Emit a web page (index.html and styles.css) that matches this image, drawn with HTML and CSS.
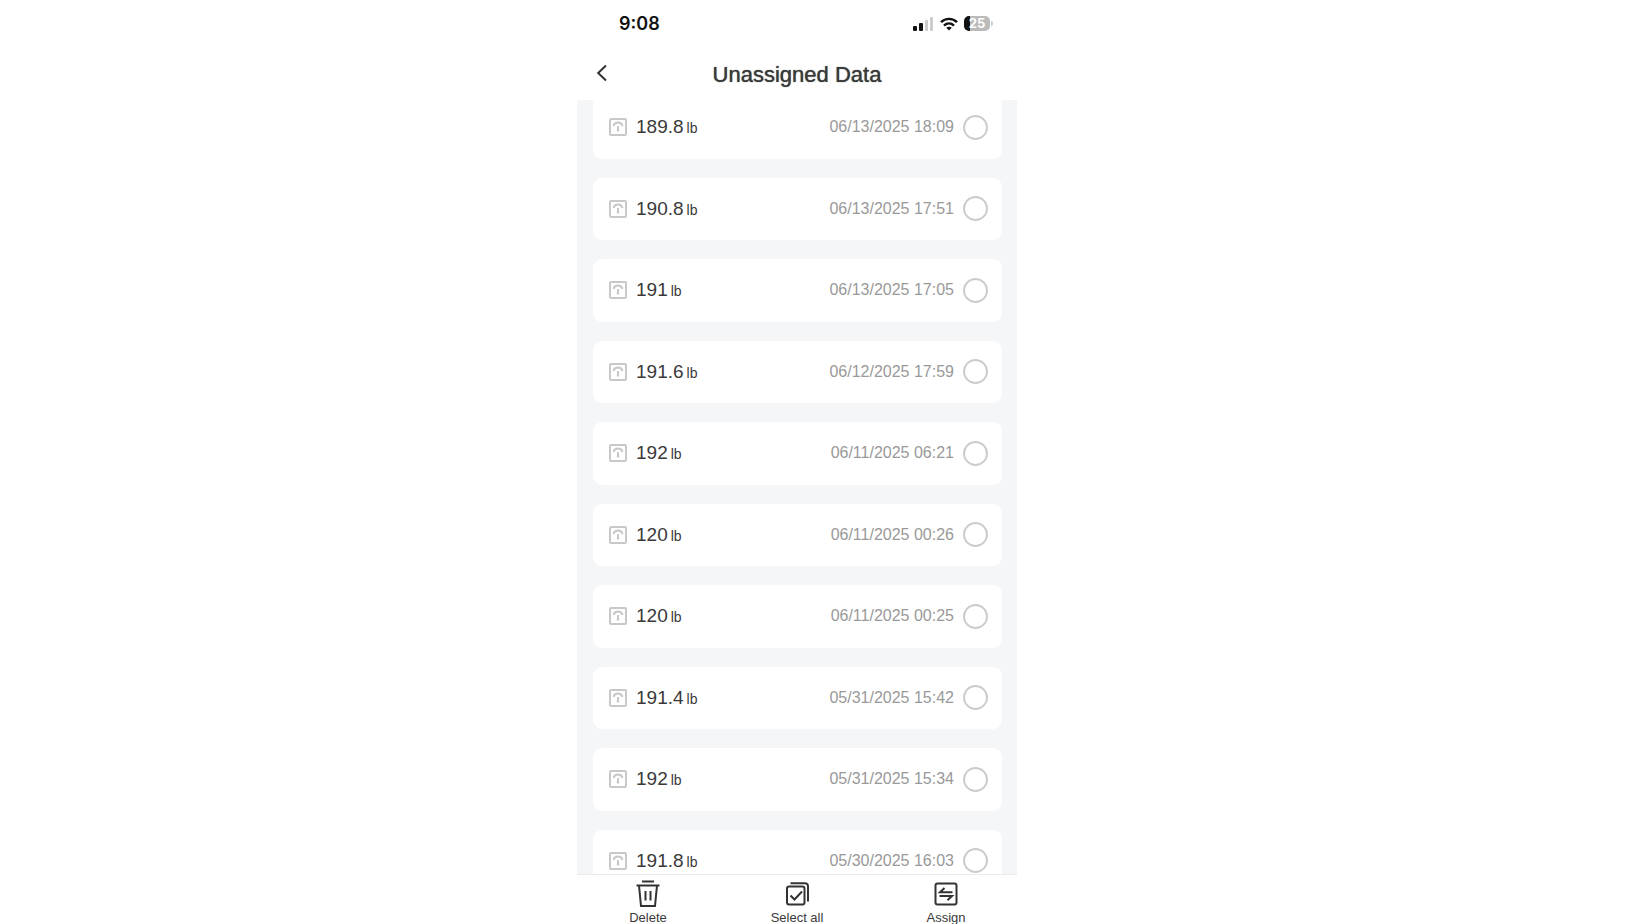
FILE: index.html
```
<!DOCTYPE html>
<html lang="en">
<head>
    <meta charset="UTF-8">
    <meta name="viewport" content="width=device-width, initial-scale=1.0">
    <title>Unassigned Data</title>
    <link rel="stylesheet" href="styles.css">
</head>
<body>
    <!-- Shared scale icon -->
    <svg class="sprite" width="0" height="0" aria-hidden="true">
        <symbol id="scale" viewBox="0 0 18 18">
            <rect x="1" y="1" width="16" height="16" rx="1" />
            <path d="M4.500 8C5.200 5.500 7 4.600 9 4.600s3.800.9 4.500 3.400" />
            <path d="M9 8v5.500M7.800 12.300h2.400" />
        </symbol>
    </svg>

    <div class="phone">
        <div class="status-bar">
            <span class="clock">9:08</span>
            <div class="status-icons">
                <svg width="21" height="14" viewBox="0 0 21 14">
                    <rect x="0" y="9" width="4" height="5" rx="1" fill="#111" />
                    <rect x="6" y="6" width="4" height="8" rx="1" fill="#111" />
                    <rect x="12" y="3" width="3" height="11" rx="1" fill="#ccc" />
                    <rect x="17" y="0" width="3" height="14" rx="1" fill="#ccc" />
                </svg>
                <svg width="18" height="14" viewBox="0 0 18 14">
                    <g fill="none" stroke="#111" stroke-width="2.4">
                        <path d="M1 5.200C5.500.7 12.500.7 17 5.200" />
                        <path d="M4 8.600c2.900-2.800 7.100-2.800 10 0" />
                    </g>
                    <path d="M9 13.600l-2.800-2.900c1.600-1.400 4-1.400 5.600 0z" fill="#111" />
                </svg>
                <span class="battery">25</span>
            </div>
        </div>

        <header class="header">
            <button class="back" type="button" aria-label="Back">
                <svg width="12" height="18" viewBox="0 0 12 18">
                    <path d="M10 1.500L2.200 9l7.800 7.500" />
                </svg>
            </button>
            <h1>Unassigned Data</h1>
        </header>

        <main class="content">
            <ul class="list">
                <li><label class="card">
                    <svg class="scale"><use href="#scale" /></svg>
                    <span class="weight">189.8<small>lb</small></span>
                    <time>06/13/2025 18:09</time>
                    <input type="checkbox">
                </label></li>
                <li><label class="card">
                    <svg class="scale"><use href="#scale" /></svg>
                    <span class="weight">190.8<small>lb</small></span>
                    <time>06/13/2025 17:51</time>
                    <input type="checkbox">
                </label></li>
                <li><label class="card">
                    <svg class="scale"><use href="#scale" /></svg>
                    <span class="weight">191<small>lb</small></span>
                    <time>06/13/2025 17:05</time>
                    <input type="checkbox">
                </label></li>
                <li><label class="card">
                    <svg class="scale"><use href="#scale" /></svg>
                    <span class="weight">191.6<small>lb</small></span>
                    <time>06/12/2025 17:59</time>
                    <input type="checkbox">
                </label></li>
                <li><label class="card">
                    <svg class="scale"><use href="#scale" /></svg>
                    <span class="weight">192<small>lb</small></span>
                    <time>06/11/2025 06:21</time>
                    <input type="checkbox">
                </label></li>
                <li><label class="card">
                    <svg class="scale"><use href="#scale" /></svg>
                    <span class="weight">120<small>lb</small></span>
                    <time>06/11/2025 00:26</time>
                    <input type="checkbox">
                </label></li>
                <li><label class="card">
                    <svg class="scale"><use href="#scale" /></svg>
                    <span class="weight">120<small>lb</small></span>
                    <time>06/11/2025 00:25</time>
                    <input type="checkbox">
                </label></li>
                <li><label class="card">
                    <svg class="scale"><use href="#scale" /></svg>
                    <span class="weight">191.4<small>lb</small></span>
                    <time>05/31/2025 15:42</time>
                    <input type="checkbox">
                </label></li>
                <li><label class="card">
                    <svg class="scale"><use href="#scale" /></svg>
                    <span class="weight">192<small>lb</small></span>
                    <time>05/31/2025 15:34</time>
                    <input type="checkbox">
                </label></li>
                <li><label class="card">
                    <svg class="scale"><use href="#scale" /></svg>
                    <span class="weight">191.8<small>lb</small></span>
                    <time>05/30/2025 16:03</time>
                    <input type="checkbox">
                </label></li>
            </ul>
        </main>

        <footer class="toolbar">
            <button type="button">
                <svg width="28" height="28" viewBox="0 0 28 28">
                    <path d="M8 1.500h12M2.500 5.500h23M5 5.500l2 20.500h14l2-20.500M11.500 11v9.500M16.500 11v9.500" />
                </svg>
                Delete
            </button>
            <button type="button">
                <svg width="28" height="28" viewBox="0 0 28 28">
                    <rect x="4" y="6.500" width="17.500" height="18" rx="2" />
                    <path d="M7.500 3.200H22a3 3 0 0 1 3 3v15.300M7.500 15.500l4 4 7.500-8" />
                </svg>
                Select all
            </button>
            <button type="button">
                <svg width="28" height="28" viewBox="0 0 28 28">
                    <rect x="3.500" y="3.500" width="21" height="21" rx="2" />
                    <path d="M12.500 8L8 12.200h12.500M7.500 16H20l-4.500 4.200" />
                </svg>
                Assign
            </button>
        </footer>
    </div>
</body>
</html>
```
FILE: styles.css
```
* {
    margin: 0;
    padding: 0;
    box-sizing: border-box;
}

body {
    font-family: "Liberation Sans", Arial, sans-serif;
    background: #fff;
    color: #3a3a3a;
    display: flex;
    justify-content: center;
    padding-right: 46px;
}

button {
    border: none;
    background: none;
    font-family: inherit;
    color: inherit;
    cursor: pointer;
}

svg {
    display: block;
    flex-shrink: 0;
}

.sprite {
    position: absolute;
}

.phone {
    width: 100%;
    max-width: 440px;
    height: 100vh;
    display: flex;
    flex-direction: column;
    overflow: hidden;
}

/* Status bar */
.status-bar {
    display: flex;
    align-items: center;
    justify-content: space-between;
    height: 47px;
    padding: 0 27px 0 42px;
}

.clock {
    font-family: Inter, sans-serif;
    font-size: 18px;
    font-weight: 600;
    color: #111;
}

.status-icons {
    display: flex;
    align-items: center;
    gap: 6px;
}

.battery {
    position: relative;
    width: 26px;
    height: 15px;
    border-radius: 5px;
    background: linear-gradient(90deg, #111 25%, #bbb 25%);
    color: #fff;
    font-family: Inter, sans-serif;
    font-size: 13px;
    font-weight: 700;
    line-height: 15px;
    text-align: center;
}

.battery::after {
    content: "";
    position: absolute;
    left: 27px;
    top: 5px;
    width: 2px;
    height: 5px;
    border-radius: 0 2px 2px 0;
    background: #ccc;
}

/* Header */
.header {
    display: grid;
    grid-template-columns: 48px 1fr 48px;
    align-items: center;
    height: 53px;
    padding-top: 2px;
}

.header h1 {
    grid-column: 2;
    font-size: 22px;
    font-weight: 400;
    text-align: center;
    text-shadow: 0 0 1px #3a3a3a;
}

.back {
    padding: 0 0 4px 19px;
}

.back svg {
    fill: none;
    stroke: #333;
    stroke-width: 2;
}

/* List */
.content {
    flex: 1;
    min-height: 0;
    display: flex;
    overflow: hidden;
    background: #f4f6f8;
}

.list {
    flex: 1;
    display: flex;
    flex-direction: column;
    gap: 19px;
    margin: -4px 0 -18px;
    padding: 0 15px 0 16px;
    list-style: none;
}

.list li {
    flex: 1;
    display: flex;
}

.card {
    flex: 1;
    display: flex;
    align-items: center;
    padding: 0 14px 0 16px;
    border-radius: 9px;
    background: #fff;
}

.scale {
    width: 18px;
    height: 18px;
    margin-right: 9px;
    fill: none;
    stroke: #c8c8c8;
    stroke-width: 2;
}

.weight {
    font-size: 19px;
}

.weight small {
    margin-left: 3px;
    font-size: 14px;
}

.card time {
    margin-left: auto;
    font-size: 16px;
    color: #999;
}

.card input {
    appearance: none;
    width: 25px;
    height: 25px;
    margin-left: 9px;
    border: 2px solid #ccc;
    border-radius: 50%;
}

.card input:checked {
    border-color: #333;
    background: #333;
}

/* Bottom toolbar */
.toolbar {
    display: flex;
    justify-content: space-between;
    height: 50px;
    padding: 5px 43px 0;
    border-top: 1px solid #e9ebed;
    background: #fff;
}

.toolbar button {
    display: flex;
    flex-direction: column;
    align-items: center;
    gap: 2px;
    min-width: 56px;
    font-size: 13px;
    line-height: 15px;
    white-space: nowrap;
}

.toolbar svg {
    fill: none;
    stroke: #333;
    stroke-width: 2;
}
```
